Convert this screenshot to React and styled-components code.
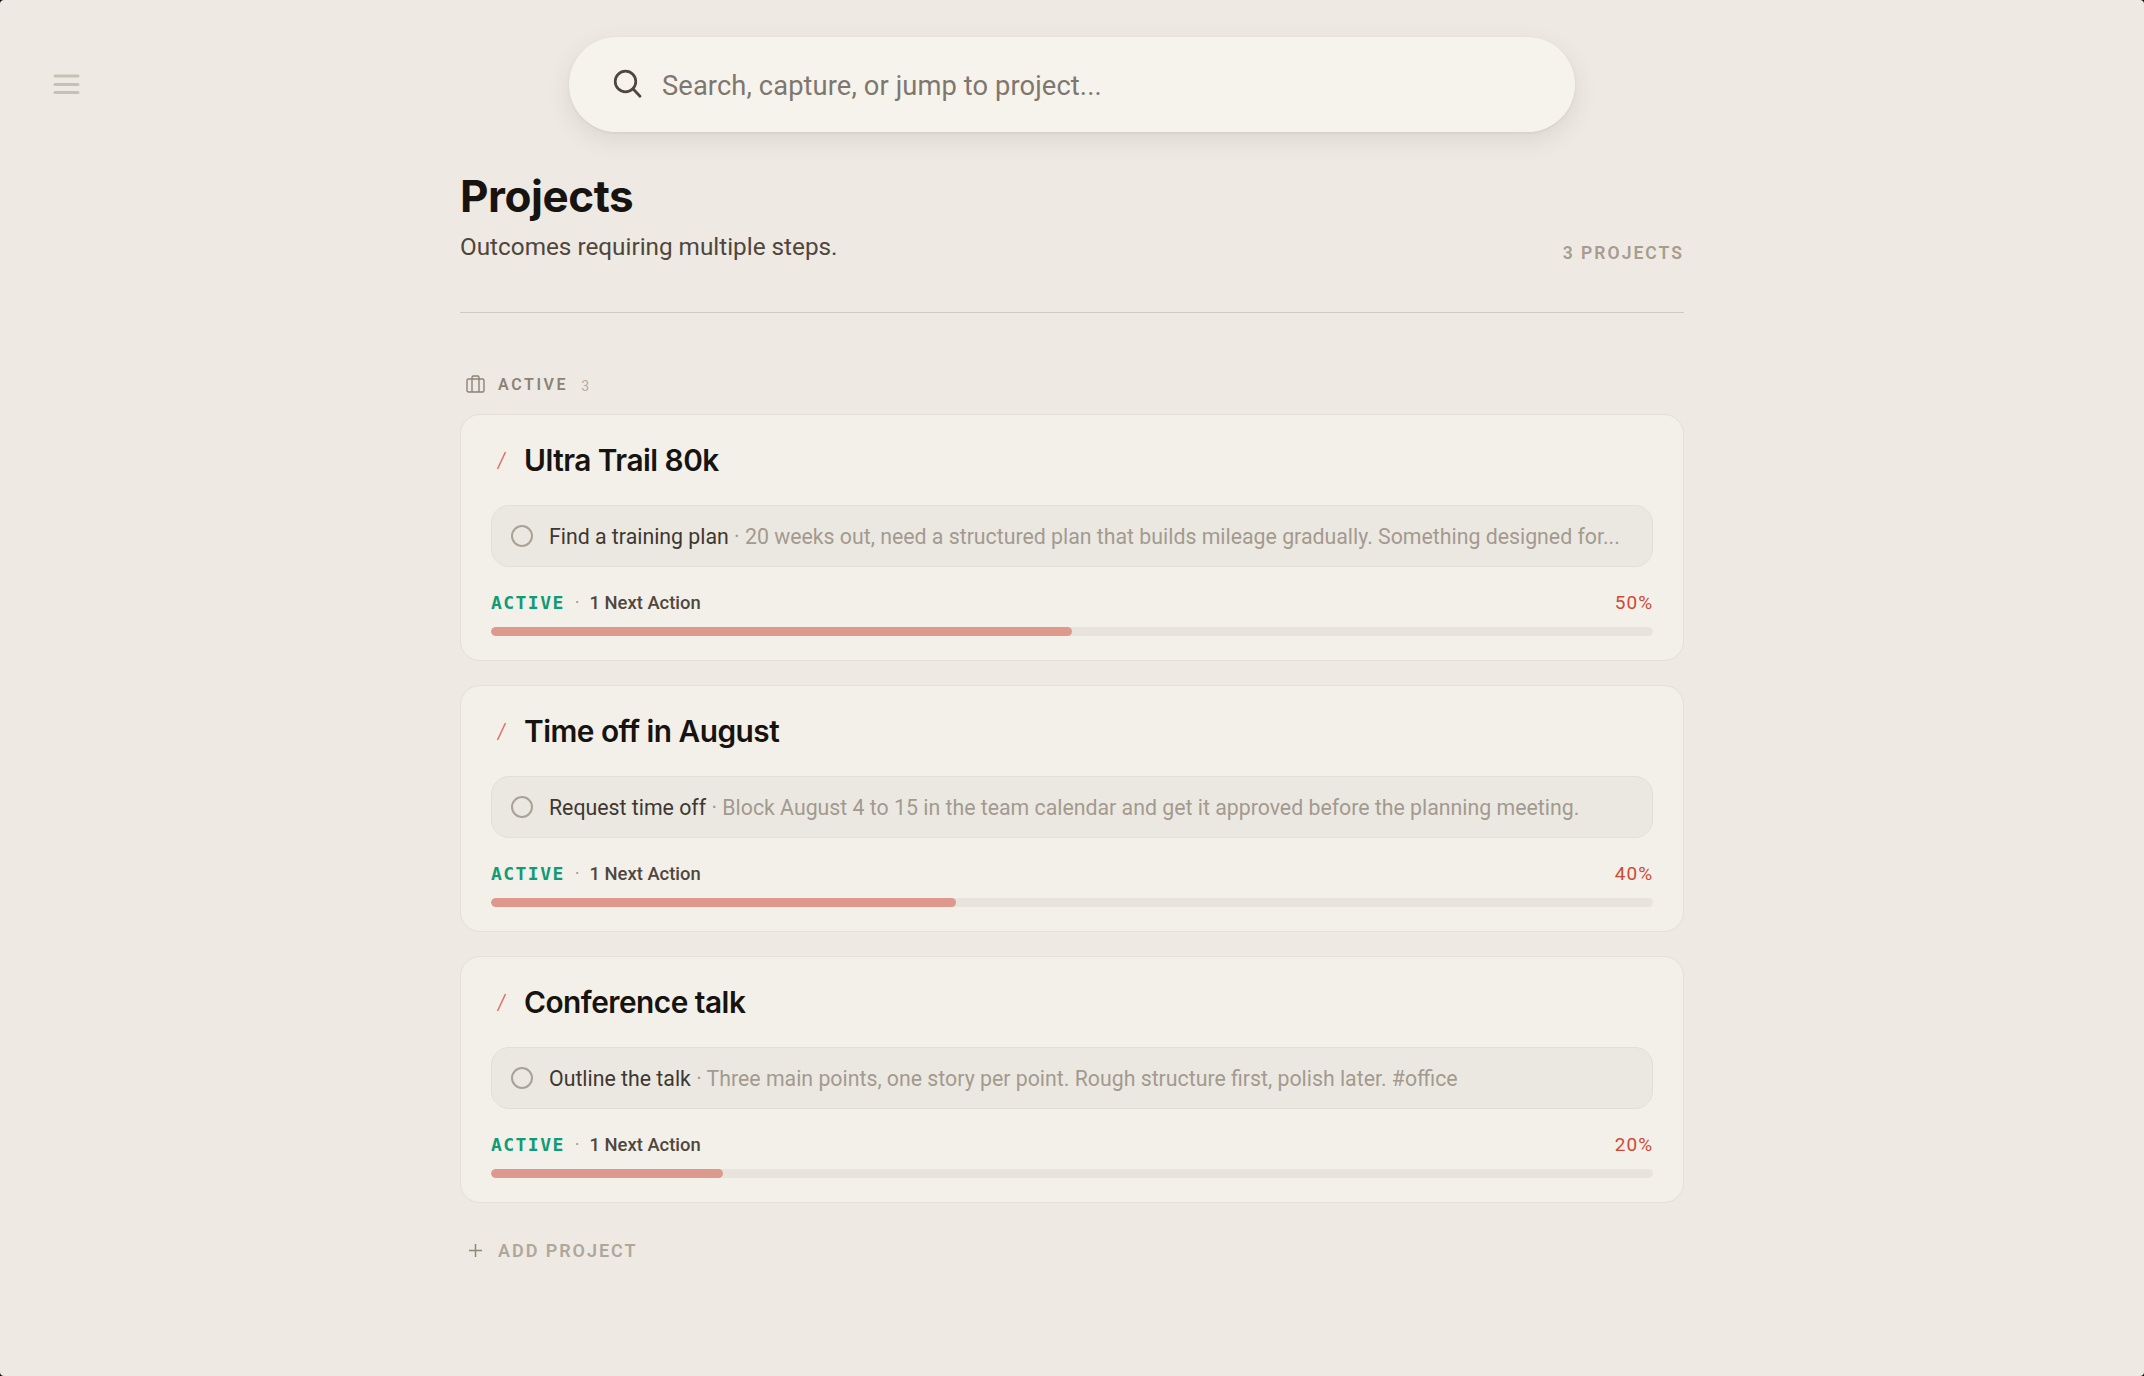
import React from "react";
import styled, { createGlobalStyle } from "styled-components";

const Global = createGlobalStyle`
  html, body { margin: 0; padding: 0; background: #000; }
  body { font-family: "Roboto", "Liberation Sans", sans-serif; }
  * { box-sizing: border-box; }
`;

const Page = styled.div`
  position: relative;
  width: 2144px;
  height: 1376px;
  background: #eeeae3;
  border-radius: 4px;
  display: flex;
  flex-direction: column;
  align-items: center;
  overflow: hidden;
`;

const MenuButton = styled.button`
  position: absolute;
  left: 52px;
  top: 72px;
  width: 28px;
  height: 24px;
  padding: 0;
  border: 0;
  background: none;
  color: #c5c1b5;
  display: flex;
`;

const SearchBar = styled.div`
  margin-top: 37px;
  width: 1006px;
  height: 95px;
  flex: none;
  border-radius: 48px;
  background: #f6f3ed;
  box-shadow: 0 8px 24px rgba(60, 50, 35, 0.1), 0 1px 3px rgba(60, 50, 35, 0.08);
  display: flex;
  align-items: center;
  padding-left: 43px;
  gap: 20px;
  color: #4f463d;
`;

const SearchGlyph = styled.svg`
  flex: none;
  margin-top: -3px;
`;

const SearchText = styled.span`
  padding-top: 2px;
  font-size: 27.3px;
  color: #7f776e;
  letter-spacing: 0.1px;
`;

const Content = styled.main`
  width: 1224px;
  padding-top: 37px;
  display: flex;
  flex-direction: column;
`;

const Header = styled.header`
  display: flex;
  justify-content: space-between;
  align-items: flex-end;
  padding-bottom: 49px;
  border-bottom: 1px solid #cfcbc3;
`;

const HeaderLeft = styled.div`
  display: flex;
  flex-direction: column;
`;

const Title = styled.h1`
  margin: 0;
  font-family: "Inter", sans-serif;
  font-weight: 700;
  font-size: 44px;
  line-height: 54px;
  letter-spacing: -0.45px;
  color: #171310;
`;

const Subtitle = styled.p`
  margin: 8px 0 0;
  font-size: 24.3px;
  line-height: 32px;
  color: #4f463d;
`;

const Count = styled.span`
  font-size: 17.5px;
  font-weight: 600;
  letter-spacing: 2.05px;
  line-height: 22px;
  margin-bottom: -1px;
  color: #a69c8f;
`;

const SectionLabel = styled.div`
  margin-top: 60px;
  padding-left: 6px;
  height: 22px;
  display: flex;
  align-items: center;
  color: #8c8375;
`;

const SectionName = styled.span`
  margin-left: 12px;
  font-size: 16px;
  font-weight: 600;
  letter-spacing: 2.6px;
  color: #8c8375;
`;

const SectionCount = styled.span`
  margin-left: 13px;
  margin-top: 3px;
  font-size: 14px;
  color: #b5ada2;
`;

const CardList = styled.div`
  margin-top: 19px;
  display: flex;
  flex-direction: column;
  gap: 24px;
`;

const Card = styled.article`
  height: 247px;
  padding: 0 30px;
  border: 1px solid #e4e0d8;
  border-radius: 20px;
  background: #f3f0e9;
  display: flex;
  flex-direction: column;
`;

const CardHead = styled.div`
  height: 90px;
  flex: none;
  display: flex;
  align-items: center;
  gap: 17px;
  padding-left: 5px;
`;

const Slash = styled.span`
  display: flex;
  color: #d9776a;
`;

const CardTitle = styled.h2`
  margin: 0;
  font-family: "Inter", sans-serif;
  font-weight: 600;
  font-size: 29.8px;
  letter-spacing: -0.5px;
  color: #171310;
`;

const ActionRow = styled.div`
  height: 62px;
  flex: none;
  border: 1px solid #e3dfd8;
  border-radius: 18px;
  background: #ebe8e2;
  display: flex;
  align-items: center;
  padding: 0 30px 0 19px;
  gap: 16px;
`;

const Radio = styled.span`
  flex: none;
  width: 22px;
  height: 22px;
  border-radius: 50%;
  border: 2px solid #a9a297;
`;

const ActionText = styled.div`
  flex: 1;
  min-width: 0;
  white-space: nowrap;
  font-size: 21.3px;
  color: #a39a8f;
`;

const ActionName = styled.span`
  color: #3f3730;
`;

const Meta = styled.div`
  margin-top: 23px;
  height: 24px;
  flex: none;
  display: flex;
  align-items: center;
  font-size: 18.4px;
`;

const Status = styled.span`
  font-family: "DejaVu Sans Mono", monospace;
  font-weight: 700;
  font-size: 18px;
  letter-spacing: 1.45px;
  color: #0f9b74;
`;

const Dot = styled.span`
  margin: 0 10px;
  color: #a39a8f;
`;

const NextAction = styled.span`
  font-weight: 500;
  color: #4f463d;
`;

const Percent = styled.span`
  margin-left: auto;
  font-size: 19px;
  font-weight: 400;
  letter-spacing: 0.95px;
  color: #cf4a33;
`;

const Track = styled.div`
  margin-top: 13px;
  height: 9px;
  flex: none;
  border-radius: 5px;
  background: #e8e4dd;
  overflow: hidden;
`;

const Fill = styled.div`
  height: 100%;
  border-radius: 5px;
  background: #dd998b;
`;

const AddProject = styled.div`
  margin-top: 37px;
  padding-left: 8px;
  display: flex;
  align-items: center;
  gap: 15px;
  color: #8f8778;
`;

const AddLabel = styled.span`
  font-size: 18px;
  font-weight: 600;
  letter-spacing: 1.95px;
  color: #b0a79c;
`;

const projects = [
  {
    title: "Ultra Trail 80k",
    action: "Find a training plan",
    note: "20 weeks out, need a structured plan that builds mileage gradually. Something designed for...",
    pct: 50,
  },
  {
    title: "Time off in August",
    action: "Request time off",
    note: "Block August 4 to 15 in the team calendar and get it approved before the planning meeting.",
    pct: 40,
  },
  {
    title: "Conference talk",
    action: "Outline the talk",
    note: "Three main points, one story per point. Rough structure first, polish later. #office",
    pct: 20,
  },
];

export default function App() {
  return (
    <Page>
      <Global />
      <MenuButton aria-label="Menu">
        <svg width="28" height="24" viewBox="0 0 28 24" fill="none" stroke="currentColor" strokeWidth="3" strokeLinecap="round">
          <path d="M3 4h23M3 12.5h23M3 20.5h23" />
        </svg>
      </MenuButton>
      <SearchBar>
        <SearchGlyph width="30" height="30" viewBox="0 0 30 30" fill="none" stroke="currentColor" strokeWidth="2.7" strokeLinecap="round">
          <circle cx="13.5" cy="13.5" r="10.3" />
          <path d="M21.2 21l6.8 7.2" />
        </SearchGlyph>
        <SearchText>Search, capture, or jump to project...</SearchText>
      </SearchBar>
      <Content>
        <Header>
          <HeaderLeft>
            <Title>Projects</Title>
            <Subtitle>Outcomes requiring multiple steps.</Subtitle>
          </HeaderLeft>
          <Count>3 PROJECTS</Count>
        </Header>
        <SectionLabel>
          <svg width="20" height="18" viewBox="0 0 20 18" fill="none" stroke="currentColor" strokeWidth="1.4">
            <rect x="1" y="4" width="17" height="13" rx="1.5" />
            <path d="M6 17V2.5A1.5 1.5 0 0 1 7.5 1h4A1.5 1.5 0 0 1 13 2.5V17" />
          </svg>
          <SectionName>ACTIVE</SectionName>
          <SectionCount>3</SectionCount>
        </SectionLabel>
        <CardList>
          {projects.map((p) => (
            <Card key={p.title}>
              <CardHead>
                <Slash>
                  <svg width="11" height="19" viewBox="0 0 11 19" fill="none" stroke="currentColor" strokeWidth="1.6">
                    <path d="M9.5 1L1.5 18" />
                  </svg>
                </Slash>
                <CardTitle>{p.title}</CardTitle>
              </CardHead>
              <ActionRow>
                <Radio />
                <ActionText>
                  <ActionName>{p.action}</ActionName> · {p.note}
                </ActionText>
              </ActionRow>
              <Meta>
                <Status>ACTIVE</Status>
                <Dot>·</Dot>
                <NextAction>1 Next Action</NextAction>
                <Percent>{p.pct}%</Percent>
              </Meta>
              <Track>
                <Fill style={{ width: `${p.pct}%` }} />
              </Track>
            </Card>
          ))}
        </CardList>
        <AddProject>
          <svg width="15" height="15" viewBox="0 0 15 15" fill="none" stroke="currentColor" strokeWidth="1.5">
            <path d="M7.5 1v13M1 7.5h13" />
          </svg>
          <AddLabel>ADD PROJECT</AddLabel>
        </AddProject>
      </Content>
    </Page>
  );
}
